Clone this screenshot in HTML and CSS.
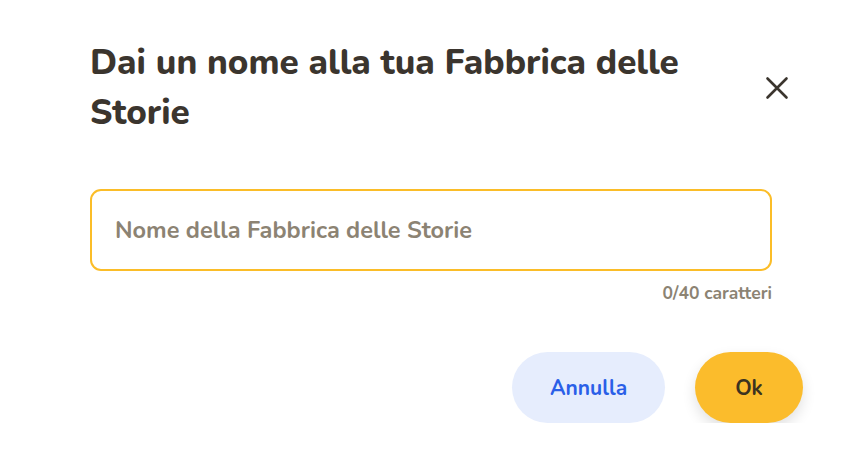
FILE: index.html
```html
<!DOCTYPE html>
<html lang="it">

<head>
    <title>Fabbrica delle Storie</title>

    <link rel="stylesheet" href="styles.css">
</head>

<body>
    <div class="dialog">
        <div class="dialog__header">
            <h1 class="dialog__title">Dai un nome alla tua Fabbrica delle Storie</h1>
            <button class="dialog__close" aria-label="Chiudi">
                <svg width="24" height="24" viewBox="0 0 24 24">
                    <path d="M2.5 2.5 L21.5 21.5 M21.5 2.5 L2.5 21.5" stroke="#3b352e" stroke-width="2.6" stroke-linecap="round" fill="none" />
                </svg>
            </button>
        </div>

        <div class="field">
            <input class="field__input" type="text" placeholder="Nome della Fabbrica delle Storie" maxlength="40" />
            <div class="field__counter">0/40 caratteri</div>
        </div>

        <div class="actions">
            <button class="btn btn--secondary">Annulla</button>
            <button class="btn btn--primary">Ok</button>
        </div>
    </div>
</body>

</html>
```

FILE: styles.css
```css
* {
    padding: 0;
    margin: 0;
    box-sizing: border-box;
}

body {
    background: #fff;
    font-family: "Nunito", Lato, "Open Sans", sans-serif;
    color: #3b352e;
}

.dialog {
    padding: 38px 47px 0 90px;
}

.dialog__header {
    display: flex;
    align-items: center;
    justify-content: space-between;
    padding-right: 14px;
}

.dialog__title {
    max-width: 640px;
    font-size: 35px;
    line-height: 50px;
    font-weight: 800;
    color: #3b352e;
}

.dialog__close {
    border: none;
    background: none;
    width: 24px;
    height: 24px;
    cursor: pointer;
    display: flex;
}

.field {
    width: 682px;
    margin-top: 51px;
}

.field__input {
    width: 100%;
    height: 82px;
    border: 2.5px solid #fbbd28;
    border-radius: 11px;
    padding: 0 23px;
    font-family: inherit;
    font-size: 23.5px;
    font-weight: 700;
    color: #3b352e;
    outline: none;
}

.field__input::placeholder {
    color: #8c8373;
}

.field__counter {
    text-align: right;
    margin-top: 10px;
    font-size: 17.5px;
    font-weight: 700;
    color: #8c8373;
}

.actions {
    display: flex;
    justify-content: flex-end;
    gap: 30px;
    margin-top: 47px;
}

.btn {
    height: 71px;
    border: none;
    border-radius: 36px;
    font-family: inherit;
    font-size: 21px;
    font-weight: 700;
    cursor: pointer;
}

.btn--secondary {
    width: 153px;
    background: #e6edfd;
    color: #2a5fe8;
}

.btn--primary {
    width: 108px;
    background: #fbbc2c;
    color: #3b3320;
    box-shadow: 0 6px 14px rgba(0, 0, 0, 0.12);
}
```
